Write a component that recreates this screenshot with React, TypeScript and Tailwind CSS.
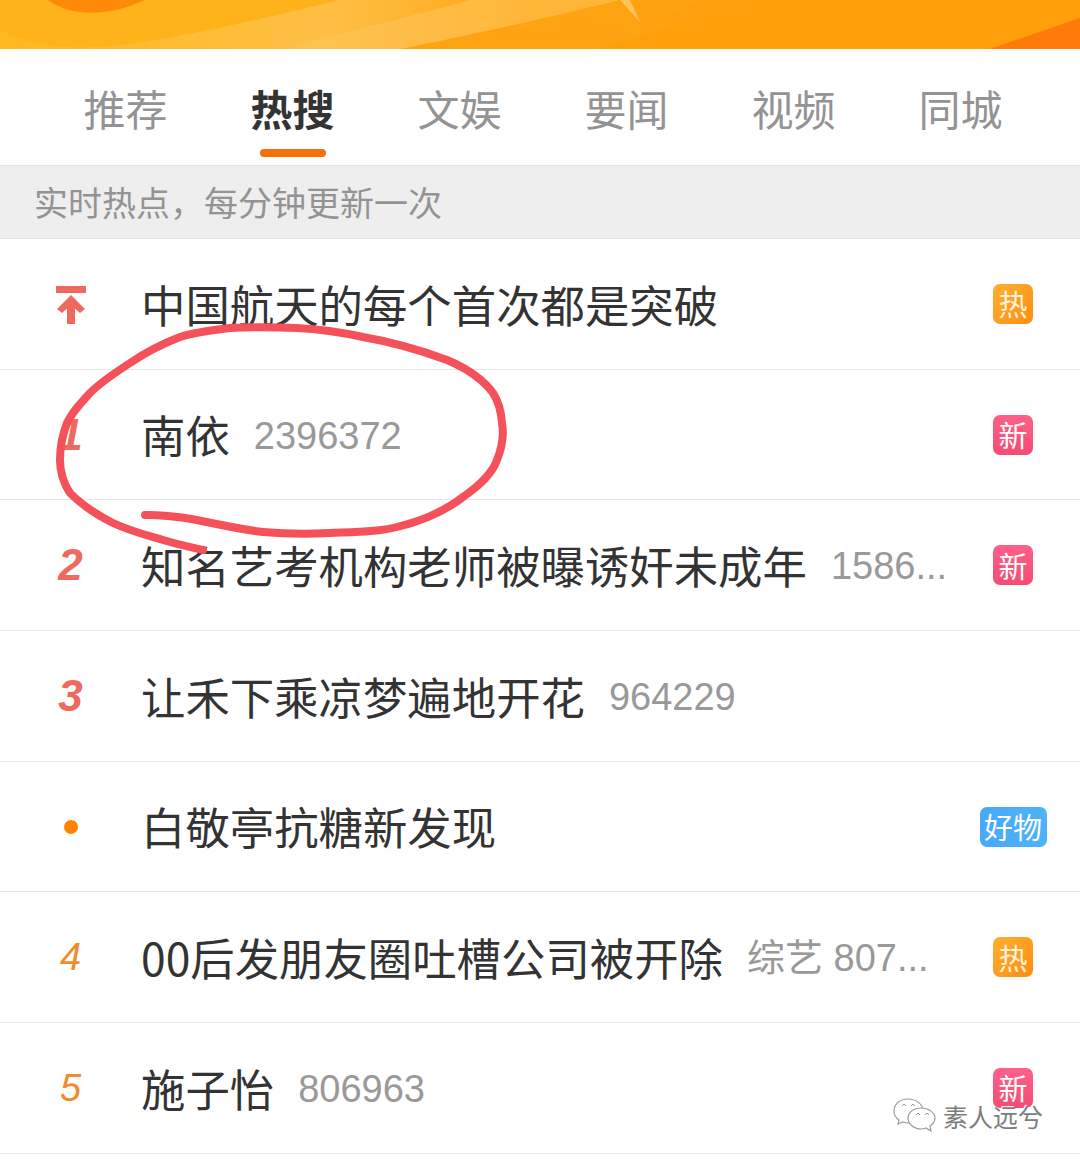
const cjk = 'font-["Noto_Sans_CJK_SC","Liberation_Sans",sans-serif]';

const tabs = ['推荐', '热搜', '文娱', '要闻', '视频', '同城'];

type Row = {
  rank: string;
  title: string;
  meta?: string;
  badge?: 'hot' | 'new' | 'good';
};

const rows: Row[] = [
  { rank: 'top', title: '中国航天的每个首次都是突破', badge: 'hot' },
  { rank: '1', title: '南依', meta: '2396372', badge: 'new' },
  { rank: '2', title: '知名艺考机构老师被曝诱奸未成年', meta: '1586...', badge: 'new' },
  { rank: '3', title: '让禾下乘凉梦遍地开花', meta: '964229' },
  { rank: 'dot', title: '白敬亭抗糖新发现', badge: 'good' },
  { rank: '4', title: '00后发朋友圈吐槽公司被开除', meta: '综艺 807...', badge: 'hot' },
  { rank: '5', title: '施子怡', meta: '806963', badge: 'new' },
];

function Rank({ rank }: { rank: string }) {
  if (rank === 'top') {
    return (
      <svg width="30" height="38" viewBox="0 0 30 38" className="mt-[2px]">
        <rect x="0" y="0" width="30" height="7" fill="#ee6a5e" />
        <path d="M15 9 L29 23 L24 27 L19 22.5 V38 H11 V22.5 L6 27 L1 23 Z" fill="#ee6a5e" />
      </svg>
    );
  }
  if (rank === 'dot') {
    return <div className="h-[14px] w-[14px] rounded-full bg-[#ff8200]" />;
  }
  if (rank === '4' || rank === '5') {
    return <span className="font-['Liberation_Sans',sans-serif] text-[38px] italic leading-none text-[#f08c2e]">{rank}</span>;
  }
  return <span className="font-['Liberation_Sans',sans-serif] text-[44px] font-bold italic leading-none text-[#ee6a5e]">{rank}</span>;
}

function Badge({ kind }: { kind: 'hot' | 'new' | 'good' }) {
  if (kind === 'good') {
    return (
      <div className="flex h-[40px] w-[67px] items-center justify-center rounded-[7px] bg-gradient-to-r from-[#4aa8f8] to-[#4cb4fb] text-[29px] leading-none text-white">
        好物
      </div>
    );
  }
  if (kind === 'new') {
    return (
      <div className="flex h-[40px] w-[40px] items-center justify-center rounded-[7px] bg-gradient-to-b from-[#ff6088] to-[#f44c72] text-[29px] leading-none text-white">
        新
      </div>
    );
  }
  return (
    <div className="flex h-[40px] w-[40px] items-center justify-center rounded-[7px] bg-gradient-to-br from-[#fdb02e] to-[#ff8c10] text-[29px] leading-none text-[#fff3d8]">
      热
    </div>
  );
}

export default function App() {
  return (
    <div className={`relative h-[1161px] w-[1080px] overflow-hidden bg-white ${cjk}`}>
      {/* banner */}
      <div className="h-[49px] w-full overflow-hidden bg-[#ffa90f]">
        <svg width="1080" height="49" viewBox="0 0 1080 49">
          <defs>
            <linearGradient id="base" x1="0" y1="0" x2="1" y2="0">
              <stop offset="0" stopColor="#ffb81f" />
              <stop offset="0.3" stopColor="#ffbf45" />
              <stop offset="0.5" stopColor="#ffa412" />
              <stop offset="1" stopColor="#ff9a05" />
            </linearGradient>
          </defs>
          <rect width="1080" height="49" fill="url(#base)" />
          <path d="M0 30 C40 52 90 49 130 44 C200 34 290 12 340 0 L0 0 Z" fill="#ffb31a" />
          <path d="M48 0 C70 16 105 18 145 0 Z" fill="#ff8a0a" />
          <path d="M285 49 C350 30 430 12 470 0 L640 0 C570 20 480 38 400 49 Z" fill="#ffc45a" opacity="0.55" />
          <path d="M400 49 C470 35 560 15 620 0 L700 0 L600 49 Z" fill="#ffa312" />
          <path d="M600 49 C660 30 720 10 770 0 L1080 0 L1080 20 L990 49 Z" fill="#ffa00a" />
          <path d="M620 0 L640 22 L630 0 Z" fill="#ffc45a" />
          <path d="M990 49 L1080 18 L1080 49 Z" fill="#ff7a08" />
        </svg>
      </div>

      {/* tabs */}
      <div className="grid h-[116px] grid-cols-6 pl-[42px] pr-[36px] pt-[32px]">
        {tabs.map((t) => (
          <div key={t} className="flex flex-col items-center">
            <span className={t === '热搜' ? 'text-[42px] font-bold leading-[54px] text-[#333333]' : 'text-[42px] leading-[54px] text-[#939393]'}>
              {t}
            </span>
            {t === '热搜' && <div className="mt-[14px] h-[8px] w-[66px] rounded-full bg-[#f77106]" />}
          </div>
        ))}
      </div>

      {/* notice */}
      <div className="flex h-[74px] items-center border-y border-[#e2e2e2] bg-[#eeeeee] pl-[34px] text-[34px] leading-none text-[#939393]">
        实时热点，每分钟更新一次
      </div>

      {/* list */}
      <div>
        {rows.map((r) => (
          <div key={r.rank} className="flex h-[130.7px] items-center border-b border-[#e6e6e6]">
            <div className="flex w-[141px] shrink-0 items-center justify-center">
              <Rank rank={r.rank} />
            </div>
            <div className="flex min-w-0 flex-1 items-center">
              <span className="whitespace-nowrap text-[44.4px] leading-none text-[#333333]">{r.title}</span>
              {r.meta && (
                <span className="ml-[24px] mt-[2px] whitespace-nowrap font-['Liberation_Sans','Noto_Sans_CJK_SC',sans-serif] text-[38px] leading-none text-[#999999]">
                  {r.meta}
                </span>
              )}
            </div>
            <div className="flex w-[134px] shrink-0 justify-center">{r.badge && <Badge kind={r.badge} />}</div>
          </div>
        ))}
      </div>

      {/* hand-drawn circle */}
      <svg className="pointer-events-none absolute left-0 top-0" width="1080" height="1161" viewBox="0 0 1080 1161">
        <path
          d="M145 515 C185 514 225 528 263 532 C285 534 310 534 330 533 C355 532 378 532 397 527 C422 521 445 511 463 497 C480 485 492 474 497 460 C503 445 504 434 502 423 C501 410 499 402 493 393 C482 378 466 368 447 360 C420 350 392 342 363 337 C340 332 318 329 297 328 C273 327 250 327 230 328 C212 330 196 332 180 337 C162 344 146 352 130 363 C113 374 100 383 90 393 C80 404 72 412 67 423 C62 436 60 448 60 460 C60 472 64 484 70 493 C82 505 97 515 113 523 C130 531 146 535 163 540 C176 544 190 547 203 550"
          fill="none"
          stroke="#f4515a"
          strokeWidth="8"
          strokeLinecap="round"
        />
      </svg>

      {/* watermark */}
      <div className="absolute left-[893px] top-[1098px] flex items-center gap-[6px]">
        <svg width="44" height="36" viewBox="0 0 44 36" fill="#ffffff" stroke="#9a9a9a" strokeWidth="1.2">
          <path d="M15 1 C7 1 1 6 1 13 C1 17 3 20 6 22 L5 26 L10 24 C12 25 14 25 16 25 C24 25 30 20 30 13 C30 6 23 1 15 1 Z" />
          <path d="M28 10 C20 10 15 15 15 20 C15 26 21 31 28 31 C30 31 31 31 33 30 L38 33 L37 28 C40 26 42 23 42 20 C42 15 36 10 28 10 Z" />
          <path d="M9 8 L11 6 L13 8 M18 8 L20 6 L22 8 M23 17 L25 15 L27 17 M32 17 L34 15 L36 17" fill="none" strokeWidth="1" />
        </svg>
        <span className="text-[25px] leading-none text-[#7d7d7d] [text-shadow:1px_1px_0_#ffffff,-1px_-1px_0_#ffffff]">素人远兮</span>
      </div>
    </div>
  );
}
